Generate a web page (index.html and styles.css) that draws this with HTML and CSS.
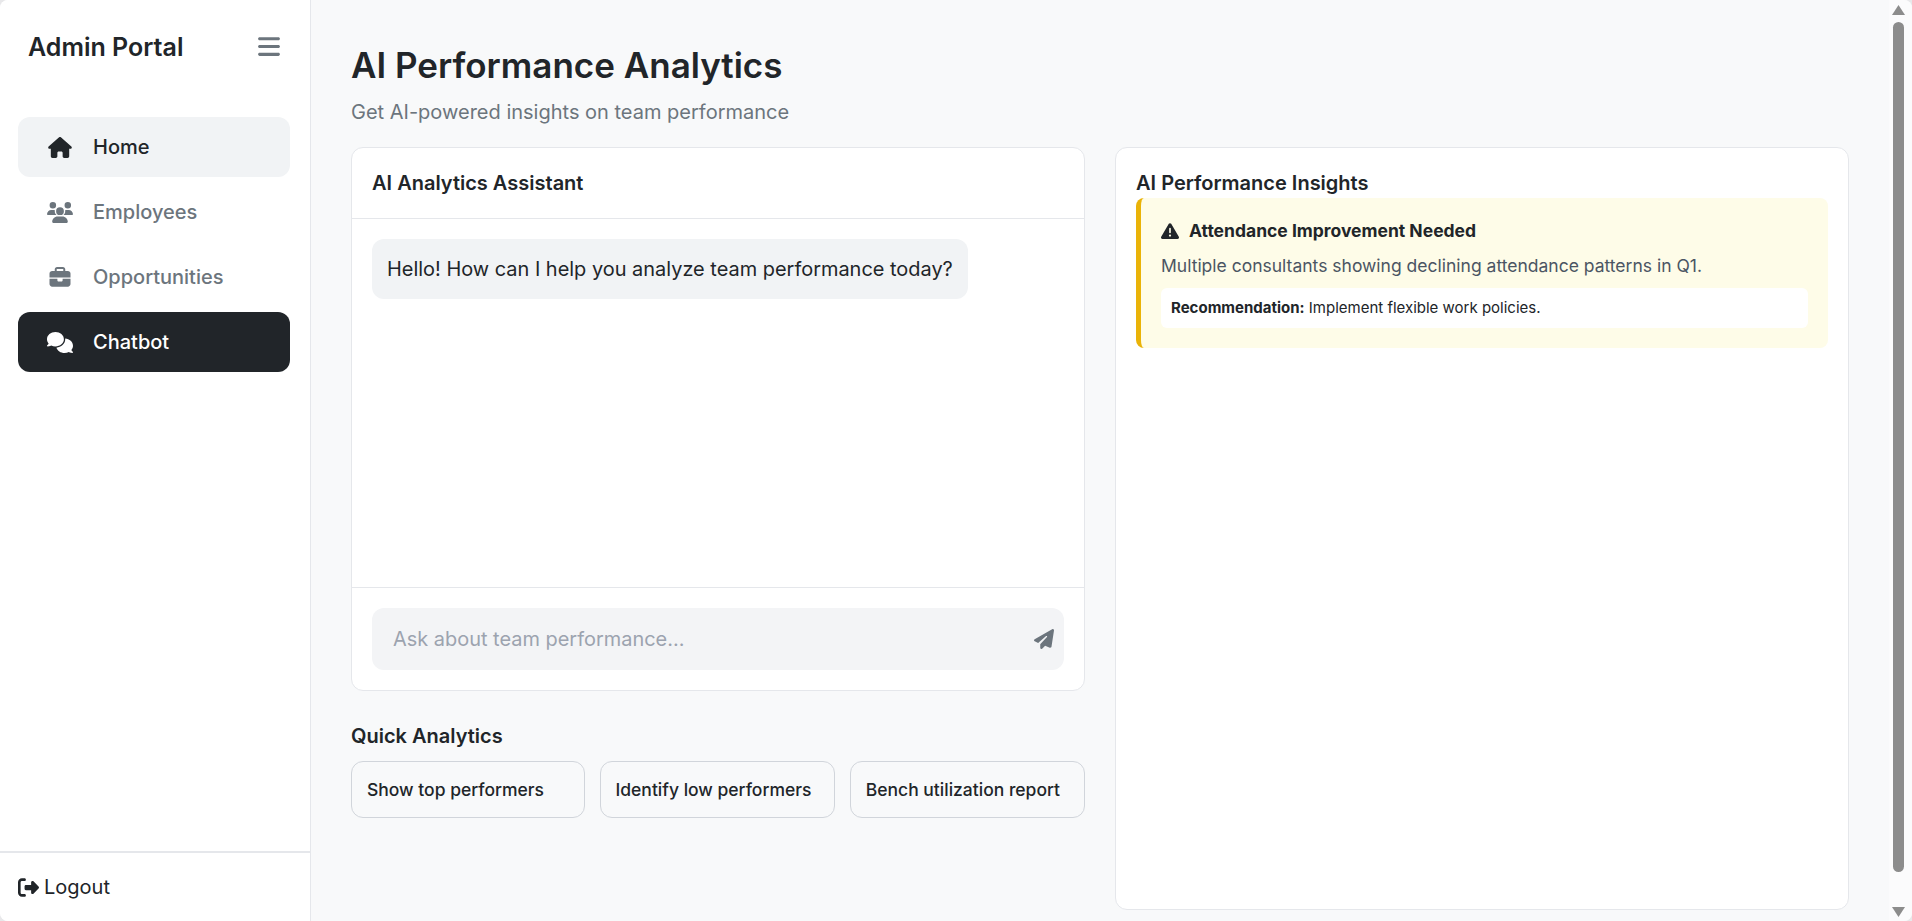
FILE: index.html
```html
<!DOCTYPE html>
<html lang="en">
<head>
<meta charset="utf-8">
<title>AI Performance Analytics</title>
<link rel="stylesheet" href="styles.css">
</head>
<body>
<div class="app">
  <aside class="sidebar">
    <div class="brand">
      <span class="brand-name">Admin Portal</span>
      <svg class="bars" viewBox="0 0 448 512"><path d="M0 96C0 78.300 14.300 64 32 64H416c17.700 0 32 14.300 32 32s-14.300 32-32 32H32C14.300 128 0 113.700 0 96zM0 256c0-17.700 14.300-32 32-32H416c17.700 0 32 14.300 32 32s-14.300 32-32 32H32c-17.700 0-32-14.300-32-32zM448 416c0 17.700-14.300 32-32 32H32c-17.700 0-32-14.300-32-32s14.300-32 32-32H416c17.700 0 32 14.300 32 32z"/></svg>
    </div>
    <nav class="nav">
      <a class="nav-item hover">
        <span class="nav-icon"><svg viewBox="0 0 576 512"><path d="M575.800 255.500c0 18-15 32.100-32 32.100h-32l.7 160.200c0 2.700-.2 5.400-.5 8.100V472c0 22.100-17.900 40-40 40H456c-1.100 0-2.200 0-3.300-.1c-1.400 .1-2.800 .1-4.200 .1H416 392c-22.100 0-40-17.900-40-40V448 384c0-17.700-14.300-32-32-32H256c-17.700 0-32 14.300-32 32v64 24c0 22.100-17.900 40-40 40H160 128.100c-1.500 0-3-.1-4.500-.2c-1.200 .1-2.400 .2-3.600 .2H104c-22.100 0-40-17.900-40-40V360c0-.9 0-1.900 .1-2.800V287.600H32c-18 0-32-14-32-32.100c0-9 3-17 10-24L266.400 8c7-7 15-8 22-8s15 2 21 7L564.800 231.500c8 7 12 15 11 24z"/></svg></span>
        Home
      </a>
      <a class="nav-item">
        <span class="nav-icon"><svg viewBox="0 0 640 512"><path d="M144 0a80 80 0 1 1 0 160A80 80 0 1 1 144 0zM512 0a80 80 0 1 1 0 160A80 80 0 1 1 512 0zM0 298.700C0 239.800 47.800 192 106.700 192h42.700c15.900 0 31 3.500 44.600 9.700c-1.300 7.200-1.900 14.700-1.900 22.300c0 38.200 16.800 72.500 43.300 96c-.2 0-.4 0-.7 0H21.300C9.600 320 0 310.400 0 298.700zM405.300 320c-.2 0-.4 0-.7 0c26.600-23.500 43.300-57.800 43.300-96c0-7.600-.7-15-1.900-22.300c13.600-6.300 28.700-9.700 44.600-9.700h42.700C592.200 192 640 239.800 640 298.700c0 11.800-9.600 21.300-21.300 21.300H405.300zM224 224a96 96 0 1 1 192 0 96 96 0 1 1 -192 0zM128 485.300C128 411.700 187.700 352 261.300 352H378.700C452.300 352 512 411.700 512 485.300c0 14.700-11.900 26.700-26.700 26.700H154.700c-14.700 0-26.700-11.900-26.700-26.700z"/></svg></span>
        Employees
      </a>
      <a class="nav-item">
        <span class="nav-icon"><svg viewBox="0 0 512 512"><path d="M184 48H328c4.400 0 8 3.600 8 8V96H176V56c0-4.400 3.600-8 8-8zm-56 8V96H64C28.700 96 0 124.700 0 160v96H192 320 512V160c0-35.300-28.700-64-64-64H384V56c0-30.900-25.100-56-56-56H184c-30.900 0-56 25.100-56 56zM512 288H320v32c0 17.700-14.300 32-32 32H224c-17.700 0-32-14.300-32-32V288H0V416c0 35.300 28.700 64 64 64H448c35.300 0 64-28.700 64-64V288z"/></svg></span>
        Opportunities
      </a>
      <a class="nav-item active">
        <span class="nav-icon"><svg viewBox="0 0 640 512"><path d="M208 352c114.900 0 208-78.800 208-176S322.900 0 208 0S0 78.800 0 176c0 38.600 14.700 74.300 39.600 103.400c-3.500 9.400-8.700 17.700-14.200 24.700c-4.800 6.200-9.700 11-13.300 14.300c-1.800 1.600-3.300 2.900-4.300 3.700c-.5 .4-.9 .7-1.100 .8l-.2 .2 0 0 0 0C1 327.200-1.400 334.400 .8 340.900S9.100 352 16 352c21.800 0 43.800-5.600 62.100-12.500c9.200-3.500 17.800-7.400 25.300-11.400C134.100 343.300 169.800 352 208 352zM448 176c0 112.300-99.100 196.900-216.500 207C255.800 457.400 336.400 512 432 512c38.200 0 73.900-8.700 104.700-23.900c7.500 4 16 7.900 25.200 11.400c18.300 6.900 40.300 12.500 62.100 12.500c6.900 0 13.100-4.500 15.200-11.100c2.100-6.600-.2-13.800-5.800-17.900l0 0 0 0-.2-.2c-.2-.2-.6-.4-1.100-.8c-1-.8-2.500-2-4.300-3.700c-3.600-3.300-8.500-8.100-13.300-14.300c-5.500-7-10.700-15.400-14.200-24.700c24.900-29 39.600-64.700 39.600-103.400c0-92.800-84.900-168.900-192.600-175.500c.4 5.100 .6 10.300 .6 15.500z"/></svg></span>
        Chatbot
      </a>
    </nav>
    <div class="logout">
      <svg class="logout-icon" viewBox="0 0 512 512"><path d="M377.900 105.900L500.700 228.700c7.200 7.200 11.300 17.100 11.300 27.300s-4.100 20.100-11.300 27.300L377.900 406.100c-6.400 6.400-15 9.900-24 9.900c-18.700 0-33.900-15.200-33.900-33.900l0-62.100-128 0c-17.700 0-32-14.300-32-32l0-64c0-17.700 14.300-32 32-32l128 0 0-62.100c0-18.700 15.200-33.900 33.900-33.900c9 0 17.600 3.600 24 9.900zM160 96L96 96c-17.700 0-32 14.300-32 32l0 256c0 17.700 14.300 32 32 32l64 0c17.700 0 32 14.300 32 32s-14.300 32-32 32l-64 0c-53 0-96-43-96-96L0 128C0 75 43 32 96 32l64 0c17.700 0 32 14.300 32 32s-14.300 32-32 32z"/></svg>
      Logout
    </div>
  </aside>

  <main class="main">
    <header class="page-head">
      <h1>AI Performance Analytics</h1>
      <p>Get AI-powered insights on team performance</p>
    </header>
    <div class="columns">
      <section class="left">
        <div class="card chat">
          <div class="chat-head">AI Analytics Assistant</div>
          <div class="chat-body">
            <div class="bubble">Hello! How can I help you analyze team performance today?</div>
          </div>
          <div class="chat-input">
            <div class="input-box">
              <span class="placeholder">Ask about team performance...</span>
              <svg class="send" viewBox="0 0 512 512"><path d="M498.100 5.600c10.100 7 15.400 19.100 13.500 31.200l-64 416c-1.500 9.700-7.400 18.200-16 23s-18.900 5.400-28 1.600L284 427.700l-68.500 74.100c-8.900 9.700-22.900 12.900-35.200 8.100S160 493.200 160 480V396.400c0-4 1.500-7.800 4.200-10.700L331.800 202.800c5.800-6.300 5.600-16-.4-22s-15.700-6.400-22-.7L106 360.800 17.700 316.600C7.100 311.300 .3 300.700 0 288.900s5.900-22.800 16.100-28.700l448-256c10.700-6.100 23.900-5.500 34 1.400z"/></svg>
            </div>
          </div>
        </div>
        <h2 class="quick-title">Quick Analytics</h2>
        <div class="quick-row">
          <button class="quick-btn">Show top performers</button>
          <button class="quick-btn">Identify low performers</button>
          <button class="quick-btn">Bench utilization report</button>
        </div>
      </section>
      <section class="card insights">
        <h2 class="insights-title">AI Performance Insights</h2>
        <div class="alert">
          <div class="alert-title">
            <svg class="warn" viewBox="0 0 512 512"><path d="M256 32c14.200 0 27.300 7.500 34.500 19.800l216 368c7.300 12.400 7.300 27.700 .2 40.100S486.300 480 472 480H40c-14.300 0-27.600-7.700-34.700-20.100s-7-27.800 .2-40.100l216-368C228.700 39.500 241.800 32 256 32zm0 128c-13.300 0-24 10.700-24 24V296c0 13.300 10.700 24 24 24s24-10.700 24-24V184c0-13.300-10.700-24-24-24zm32 224a32 32 0 1 0 -64 0 32 32 0 1 0 64 0z"/></svg>
            Attendance Improvement Needed
          </div>
          <p class="alert-text">Multiple consultants showing declining attendance patterns in Q1.</p>
          <div class="rec"><strong>Recommendation:</strong> Implement flexible work policies.</div>
        </div>
      </section>
    </div>
  </main>

  <div class="scrollbar">
    <svg class="arrow" viewBox="0 0 13 10"><path d="M6.500 0L13 10H0z"/></svg>
    <div class="thumb-wrap"><div class="thumb"></div></div>
    <svg class="arrow" viewBox="0 0 13 10"><path d="M0 0H13L6.500 10z"/></svg>
  </div>
</div>
</body>
</html>
```
FILE: styles.css
```css
* { box-sizing: border-box; }
html, body { margin: 0; height: 100%; overflow: hidden; }
body { font-family: Inter, "Liberation Sans", sans-serif; color: #212529; background: #e8e8ea; }

.app { display: flex; height: 921px; border-radius: 8px; overflow: hidden; background: #f8f9fa; }

.sidebar {
  width: 311px; flex: none; display: flex; flex-direction: column;
  background: #fff; border-right: 1px solid #e5e7eb;
}
.brand {
  display: flex; align-items: center; justify-content: space-between;
  height: 93px; padding: 0 30px 0 28px;
}
.brand-name { font-size: 25px; font-weight: 600; }
.bars { width: 22px; height: 25px; fill: #6c757d; }

.nav { display: flex; flex-direction: column; gap: 5px; padding: 24px 20px 0 18px; flex: 1; }
.nav-item {
  display: flex; align-items: center; height: 60px; padding-left: 30px;
  border-radius: 12px; font-size: 20px; font-weight: 500; color: #6c757d;
}
.nav-item.hover { background: #f1f3f5; color: #212529; }
.nav-item.active { background: #212529; color: #fff; }
.nav-icon { width: 45px; flex: none; display: flex; justify-content: center; padding-right: 21px; }
.nav-icon svg { width: 26px; height: 21px; fill: currentColor; flex: none; }

.logout {
  height: 70px; border-top: 2px solid #e5e7eb; padding-left: 18px;
  display: flex; align-items: center; gap: 5px; font-size: 20px;
}
.logout-icon { width: 21px; height: 21px; fill: #212529; }

.main { flex: 1; min-width: 0; display: flex; flex-direction: column; padding: 40px 40px 11px; }
.page-head h1 { margin: 0; font-size: 35px; font-weight: 600; line-height: 50px; }
.page-head p { margin: 10px 0 0; font-size: 20px; line-height: 24px; color: #6c757d; }
.columns { flex: 1; min-height: 0; display: grid; grid-template-columns: 1fr 1fr; gap: 30px; margin-top: 23px; }

.card { background: #fff; border: 1px solid #e5e7eb; border-radius: 12px; }
.left { display: flex; flex-direction: column; }
.chat { height: 544px; display: flex; flex-direction: column; }
.chat-head {
  height: 71px; flex: none; padding: 0 20px; display: flex; align-items: center;
  font-size: 20px; font-weight: 600; border-bottom: 1px solid #e5e7eb;
}
.chat-body { flex: 1; padding: 20px; display: flex; align-items: flex-start; }
.bubble { height: 60px; padding: 0 15px; display: flex; align-items: center; background: #f1f3f5; border-radius: 12px; font-size: 19.95px; }
.chat-input { flex: none; height: 103px; border-top: 1px solid #e5e7eb; padding: 20px; }
.input-box {
  height: 62px; padding: 0 10px 0 21px; display: flex; align-items: center; justify-content: space-between;
  background: #f3f4f6; border-radius: 12px;
}
.placeholder { font-size: 19.95px; color: #9ca3af; }
.send { width: 20px; height: 20px; fill: #6c757d; }

.quick-title { margin: 33px 0 13px; font-size: 20px; line-height: 24px; font-weight: 600; }
.quick-row { display: grid; grid-template-columns: 233.5px 1fr 1fr; gap: 15px; }
.quick-btn {
  height: 57px; padding: 0 15px; background: #f8f9fa; border: 1px solid #d1d5db; border-radius: 12px;
  font: 500 17.5px Inter, "Liberation Sans", sans-serif; color: #212529; text-align: left; white-space: nowrap;
}

.insights { padding: 20px; }
.insights-title { margin: 0; font-size: 20px; line-height: 30px; font-weight: 600; }
.alert {
  height: 150px; padding: 20px; background: #fefce8; border-left: 5px solid #eab308; border-radius: 8px;
}
.alert-title { display: flex; align-items: center; gap: 10px; font-size: 17.5px; font-weight: 700; line-height: 26px; }
.warn { width: 18px; height: 18px; fill: #212529; flex: none; }
.alert-text { margin: 9px 0 0; font-size: 17.5px; line-height: 26px; color: #4b5563; }
.rec {
  margin-top: 9px; height: 40px; padding: 0 10px; line-height: 40px; background: #fff; border-radius: 6px;
  font-size: 15px;
}
.rec strong { font-weight: 700; }

.scrollbar { width: 23px; flex: none; display: flex; flex-direction: column; align-items: flex-start; padding: 5px 0 4px 3px; background: #fbfbfc; }
.arrow { width: 13px; height: 10px; fill: #8c8c8c; flex: none; }
.thumb-wrap { flex: 1; width: 100%; padding: 7px 0 35px 1px; }
.thumb { width: 11px; height: 100%; background: #8c8c8c; border-radius: 6px; }
```
